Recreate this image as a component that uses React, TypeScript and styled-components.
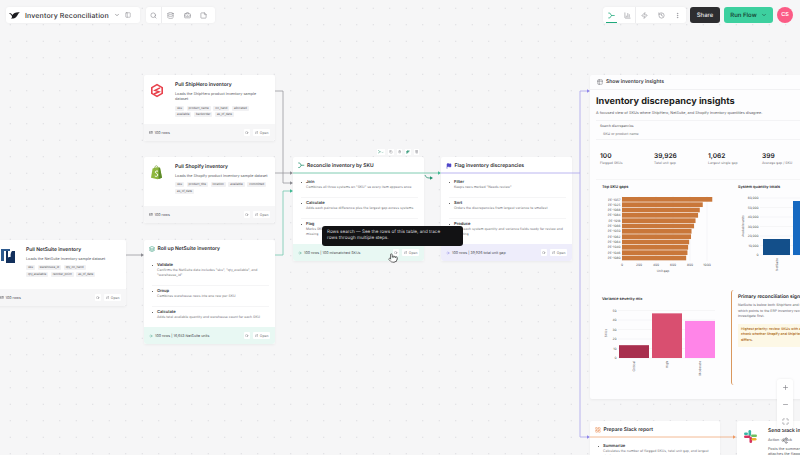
import React from "react";
import styled, { createGlobalStyle } from "styled-components";
import {
  ArrowRight, BarChart3, BriefcaseBusiness, ChevronDown, Database, ExternalLink, Flag, History,
  Layers, LayoutGrid, Maximize, Minus, MoreVertical, PanelLeft, Plus, Pointer, Search, Share2,
  Sparkles, StickyNote, Zap, Table2, Copy, Trash2, Settings,
} from "lucide-react";

const GlobalStyle = createGlobalStyle`
  html, body { margin: 0; padding: 0; height: 100%; }
  body { font-family: Inter, "Liberation Sans", sans-serif; color: #232326; text-rendering: geometricPrecision; }
  * { box-sizing: border-box; }
`;

const Canvas = styled.div`
  position: relative;
  width: 800px;
  height: 455px;
  overflow: hidden;
  background-color: #f6f6f7;
  background-image: radial-gradient(circle, #d4d4d8 0.5px, transparent 0.7px);
  background-size: 16.5px 16.5px;
  background-position: 2px 0;
`;

const Bar = styled.div<{ $left?: number; $right?: number; $gap: number }>`
  position: absolute;
  top: 7px;
  ${(p) => (p.$left !== undefined ? `left: ${p.$left}px;` : "")}
  ${(p) => (p.$right !== undefined ? `right: ${p.$right}px;` : "")}
  display: flex;
  align-items: center;
  gap: ${(p) => p.$gap}px;
  z-index: 5;
`;

const Panel = styled.div<{ $pad?: number }>`
  display: flex;
  align-items: center;
  height: 16px;
  padding-right: ${(p) => p.$pad || 0}px;
  background: #fff;
  border-radius: 3px;
  box-shadow: 0 0 3px rgba(0, 0, 0, 0.05);
`;

const AppTitle = styled.span`
  font-size: 7px;
  font-weight: 500;
  letter-spacing: 0.02em;
  color: #333336;
  margin: 0 5px 0 3px;
  white-space: nowrap;
`;

const ToolButton = styled.div<{ $active?: boolean; $divided?: boolean }>`
  position: relative;
  width: 16.6px;
  height: 16px;
  display: flex;
  align-items: center;
  justify-content: center;
  color: ${(p) => (p.$active ? "#1fa97c" : "#8a8a90")};
  border-right: ${(p) => (p.$divided ? "1px solid #ececee" : "none")};
  ${(p) => (p.$active ? `&::after { content: ""; position: absolute; left: 3px; right: 3px; bottom: 0; height: 1px; background: #1fa97c; }` : "")}
`;

const ShareButton = styled.div`
  height: 16px;
  width: 30px;
  display: flex;
  align-items: center;
  justify-content: center;
  background: #2d2d30;
  color: #e4e4e6;
  border-radius: 3px;
  font-size: 6px;
  font-weight: 500;
`;

const RunButton = styled.div`
  height: 16px;
  width: 49px;
  display: flex;
  align-items: center;
  justify-content: center;
  gap: 4px;
  background: #3dd09f;
  color: #12372b;
  border-radius: 3px;
  font-size: 6px;
  font-weight: 500;
`;

const Avatar = styled.div`
  width: 16px;
  height: 16px;
  border-radius: 50%;
  background: #fb5b85;
  color: #fff;
  font-size: 5.5px;
  font-weight: 600;
  display: flex;
  align-items: center;
  justify-content: center;
`;

const Node = styled.div<{ $x: number; $y: number; $w: number }>`
  position: absolute;
  left: ${(p) => p.$x}px;
  top: ${(p) => p.$y}px;
  width: ${(p) => p.$w}px;
  background: #fff;
  border-radius: 2px;
  box-shadow: 0 1px 3px rgba(0, 0, 0, 0.05);
  z-index: 1;
`;

const SourceBody = styled.div`
  display: flex;
  gap: 10px;
  padding: 6px 6px 0 6px;
  height: 49px;
`;

const LogoBox = styled.div`
  flex: 0 0 15px;
  padding-top: 1px;
`;

const SourceText = styled.div`
  display: flex;
  flex-direction: column;
  min-width: 0;
`;

const NodeTitle = styled.div`
  font-size: 5px;
  font-weight: 600;
  line-height: 8px;
  white-space: nowrap;
  color: #2b2b2f;
`;

const NodeDesc = styled.div<{ $gap?: number }>`
  font-size: 3.75px;
  line-height: 5.4px;
  margin-top: ${(p) => p.$gap ?? 2}px;
  color: #55555b;
`;

const Tags = styled.div<{ $max?: number }>`
  display: flex;
  flex-wrap: wrap;
  gap: 1.7px 2.5px;
  margin-top: 4px;
  ${(p) => (p.$max ? `max-width: ${p.$max}px;` : "")}
`;

const Tag = styled.span`
  font-size: 3px;
  line-height: 4.8px;
  padding: 0 2px;
  background: #f1f1f3;
  border-radius: 1px;
  color: #55555b;
`;

const Footer = styled.div<{ $tone?: string }>`
  display: flex;
  align-items: center;
  gap: 3px;
  height: 17px;
  padding: 0 5px;
  font-size: 3.6px;
  color: #44444a;
  background: ${(p) => p.$tone || "#f6f6f7"};
  border-radius: 0 0 3px 3px;
`;

const FooterText = styled.span`
  flex: 1;
  white-space: nowrap;
  display: flex;
  align-items: center;
  gap: 2px;
`;

const MiniButton = styled.span`
  height: 6.5px;
  display: inline-flex;
  align-items: center;
  gap: 1.5px;
  padding: 0 1.5px;
  background: #fff;
  border-radius: 1px;
  color: #66666c;
  font-size: 3.4px;
`;

const StepHeader = styled.div`
  display: flex;
  align-items: center;
  gap: 2.5px;
  height: 16px;
  padding: 1px 5px 0;
  font-size: 5px;
  font-weight: 600;
  color: #2b2b2f;
  white-space: nowrap;
`;

const StepList = styled.div`
  padding: 4px 6px 0 8px;
`;

const Step = styled.div`
  position: relative;
  padding: 2px 0 7px 5px;
  &:not(:last-child) { border-bottom: 1px solid #f5f5f6; }
  &::before {
    content: "";
    position: absolute;
    left: 0;
    top: 4.5px;
    width: 1.4px;
    height: 1.4px;
    border-radius: 50%;
    background: #333;
  }
`;

const StepName = styled.div`
  font-size: 4.1px;
  font-weight: 600;
  line-height: 6px;
  color: #333336;
`;

const StepDesc = styled.div`
  font-size: 3.4px;
  line-height: 5px;
  color: #77777d;
`;

const EdgeLayer = styled.svg`
  position: absolute;
  inset: 0;
  width: 800px;
  height: 455px;
  z-index: 2;
  pointer-events: none;
`;

const Tooltip = styled.div`
  position: absolute;
  left: 322px;
  top: 226px;
  width: 141px;
  height: 20px;
  padding: 3.5px 5px;
  background: #121214;
  border-radius: 3px;
  color: #d6d6d8;
  font-size: 4.6px;
  line-height: 6.4px;
  white-space: nowrap;
  z-index: 6;
`;

const CursorMark = styled.div`
  position: absolute;
  left: 388px;
  top: 253px;
  color: #222;
  z-index: 7;
  line-height: 0;
`;

const FloatTools = styled.div`
  position: absolute;
  left: 375px;
  top: 149px;
  height: 6px;
  width: 46px;
  display: flex;
  align-items: center;
  justify-content: space-around;
  z-index: 3;
`;

const FloatChip = styled.span<{ $green?: boolean }>`
  display: inline-flex;
  align-items: center;
  height: 6px;
  padding: 0 1px;
  background: #fff;
  color: ${(p) => (p.$green ? "#1f8f6c" : "#77777d")};
`;

const InsightsCard = styled(Node)`
  background: #fdfdfe;
  height: 324px;
`;

const InsightsHeader = styled.div`
  display: flex;
  align-items: center;
  gap: 3px;
  height: 15px;
  padding: 0 7px;
  font-size: 5px;
  font-weight: 600;
  color: #3a3a3e;
  border-bottom: 1px solid #f1f1f3;
`;

const InsightsBody = styled.div`
  padding: 6px 6px 0 6px;
`;

const BigTitle = styled.h1`
  margin: 0;
  font-size: 9.2px;
  line-height: 11px;
  font-weight: 700;
  color: #1e1e21;
  white-space: nowrap;
`;

const Lead = styled.p`
  margin: 3px 0 0;
  font-size: 3.75px;
  line-height: 5px;
  color: #55555b;
  white-space: nowrap;
`;

const SearchBlock = styled.div`
  margin-top: 5px;
  padding: 3px 4px 3px;
  height: 20px;
  border-top: 1px solid #f3f3f5;
  border-bottom: 1px solid #f3f3f5;
`;

const SearchLabel = styled.div`
  font-size: 3.3px;
  line-height: 5px;
  color: #3f3f44;
`;

const SearchInput = styled.div`
  margin: 3px 0 0 3px;
  font-size: 3.5px;
  line-height: 5px;
  color: #77777d;
`;

const Stats = styled.div`
  display: grid;
  grid-template-columns: repeat(4, 54px);
  margin-top: 12px;
  padding-left: 4px;
  height: 28px;
  border-bottom: 1px solid #f5f5f6;
`;

const StatValue = styled.div`
  font-size: 6.6px;
  line-height: 8px;
  font-weight: 600;
  color: #232326;
`;

const StatLabel = styled.div`
  font-size: 3.4px;
  line-height: 5px;
  margin-top: 1px;
  color: #77777d;
  white-space: nowrap;
`;

const ChartRow = styled.div<{ $h: number }>`
  display: grid;
  grid-template-columns: 135px 1fr;
  height: ${(p) => p.$h}px;
  padding-top: 4px;
`;

const ChartCell = styled.div`
  min-width: 0;
`;

const ChartTitle = styled.div<{ $inset: number }>`
  font-size: 3.9px;
  line-height: 6px;
  font-weight: 600;
  margin-left: ${(p) => p.$inset}px;
  color: #232326;
`;

const Signal = styled.div`
  height: 95px;
  margin-top: -6px;
  padding: 4px 0 0 6px;
  border-left: 1px solid #d9985e;
  border-radius: 3px;
`;

const SignalTitle = styled.div`
  font-size: 4.8px;
  line-height: 7px;
  font-weight: 600;
  color: #232326;
  white-space: nowrap;
`;

const SignalText = styled.div`
  margin-top: 2px;
  font-size: 3.5px;
  line-height: 5.6px;
  color: #66666c;
  white-space: nowrap;
`;

const Callout = styled.div`
  margin-top: 4px;
  width: 180px;
  height: 23px;
  padding: 3px;
  background: #fdf8e6;
  color: #a8620f;
  font-size: 3.5px;
  line-height: 5.6px;
  font-weight: 500;
  white-space: nowrap;
`;

const ZoomPanel = styled.div`
  position: absolute;
  left: 777px;
  top: 379px;
  width: 16px;
  height: 50px;
  display: flex;
  flex-direction: column;
  align-items: center;
  gap: 10px;
  padding-top: 4.5px;
  background: #fff;
  border-radius: 3px;
  box-shadow: 0 0 3px rgba(0, 0, 0, 0.08);
  color: #77777d;
  z-index: 5;
`;

const LayoutTool = styled.div`
  position: absolute;
  left: 781px;
  top: 437px;
  line-height: 0;
  color: #77777d;
  z-index: 5;
`;

const sizes = { tool: 7, mini: 3.6 };

const ShipHeroLogo = () => (
  <svg width="14" height="15" viewBox="0 0 14 15">
    <path d="M7 .8 13 4.2v6.6L7 14.2 1 10.8V4.2z" fill="#e8404b" />
    <path d="M7 2.6 11.4 5.1v4.8L7 12.4 2.6 9.9V5.1z" fill="#fff" />
    <path d="M10 4.9 5 7.4l4 1.4-5 2.2" fill="none" stroke="#e8404b" strokeWidth="1.5" />
  </svg>
);

const ShopifyLogo = () => (
  <svg width="13" height="15" viewBox="0 0 13 15">
    <path d="M1 12.8 2.6 3.6 6.6 2.2 10 2.8 12 12.8 7.6 14.2z" fill="#8fb83f" />
    <path d="M8.6 2.6 10 2.8 12 12.8 8.6 14z" fill="#5d8a2c" />
    <path d="M4.6 3.6C4.6 1.2 6 .5 6.8 .8 7.8 1.2 8 2.4 8 3.4" fill="none" stroke="#7ba13a" strokeWidth=".7" />
    <path d="M8 6.2C6.6 5.7 5.2 6.2 5.3 7.2c.1 1.2 2.5 1.2 2.5 2.8 0 1.4-1.9 1.7-3 1" fill="none" stroke="#fff" strokeWidth="1" />
  </svg>
);

const NetSuiteLogo = () => (
  <svg width="15" height="15" viewBox="0 0 15 15">
    <path d="M0 1h9v2H3v10H0z" fill="#2d5a8e" />
    <path d="M5 3h2v7l4-7h3v12H5z" fill="#12305c" />
    <path d="M7 5v4h2.6V5z" fill="#fff" />
  </svg>
);

const SlackLogo = () => (
  <svg width="15" height="15" viewBox="0 0 15 15">
    <rect x="5.5" y="1" width="2.6" height="6" rx="1.3" fill="#38b6a5" />
    <rect x="1" y="6.4" width="6.5" height="2.6" rx="1.3" fill="#d6325f" />
    <rect x="6.5" y="8" width="2.6" height="6" rx="1.3" fill="#d6325f" />
    <rect x="8" y="5.4" width="6" height="2.6" rx="1.3" fill="#6fbf5f" />
    <rect x="8.5" y="9" width="5" height="2.6" rx="1.3" fill="#ecb22e" />
    <rect x="1" y="3.4" width="4" height="2.6" rx="1.3" fill="#38b6a5" />
  </svg>
);

const BrandMark = () => (
  <svg width="11" height="7" viewBox="0 0 11 7" style={{ margin: "0 2px 0 3px" }}>
    <path d="M0 1.2C1.4 .8 2.6 1.8 3.3 3 4.4 1.3 7 0 10.8.4 9 1.2 8.8 3.4 7.2 5 5.6 6.6 3.2 6.8 1.8 6.3 3 5.8 3.2 5 2.9 4.2 2.4 2.8 1.2 1.8 0 1.2z" fill="#1c1c1f" />
  </svg>
);

// branching arrows used for the canvas tab and the join step
const FlowIcon = ({ size, color }: { size: number; color: string }) => (
  <svg width={size} height={size} viewBox="0 0 10 10" fill="none" stroke={color} strokeWidth="1.1" strokeLinecap="round" strokeLinejoin="round">
    <path d="M1 1.5h1.6L5 5 2.6 8.5H1" />
    <path d="M5 5h4" />
  </svg>
);

type SourceProps = {
  x: number; y: number; w: number; title: string; desc: string; tags: string[]; tagsMax?: number; logo: React.ReactNode;
};

const RowButtons = () => (
  <>
    <MiniButton><Search size={sizes.mini} /></MiniButton>
    <MiniButton><ExternalLink size={sizes.mini} /> Open</MiniButton>
  </>
);

const SourceNode = ({ x, y, w, title, desc, tags, tagsMax, logo }: SourceProps) => (
  <Node $x={x} $y={y} $w={w}>
    <SourceBody>
      <LogoBox>{logo}</LogoBox>
      <SourceText>
        <NodeTitle>{title}</NodeTitle>
        <NodeDesc>{desc}</NodeDesc>
        <Tags $max={tagsMax}>{tags.map((t) => <Tag key={t}>{t}</Tag>)}</Tags>
      </SourceText>
    </SourceBody>
    <Footer>
      <FooterText><Database size={sizes.mini} /> 100 rows</FooterText>
      <RowButtons />
    </Footer>
  </Node>
);

type StepNodeProps = {
  x: number; y: number; title: string; icon: React.ReactNode; steps: [string, string][];
  summary: string; tone: string; accent: string;
};

const StepNode = ({ x, y, title, icon, steps, summary, tone, accent }: StepNodeProps) => (
  <Node $x={x} $y={y} $w={131}>
    <StepHeader>{icon}{title}</StepHeader>
    <StepList>
      {steps.map(([name, desc]) => (
        <Step key={name}>
          <StepName>{name}</StepName>
          <StepDesc>{desc}</StepDesc>
        </Step>
      ))}
    </StepList>
    <Footer $tone={tone}>
      <FooterText>
        <ArrowRight size={4} color={accent} /> {summary}
      </FooterText>
      <RowButtons />
    </Footer>
  </Node>
);

const Edges = () => (
  <EdgeLayer viewBox="0 0 800 455">
    <g fill="none" strokeWidth="0.8">
      <path d="M275 91H283V183H290" stroke="#9b9ba0" />
      <path d="M275 173H290" stroke="#9b9ba0" />
      <path d="M126 255H141" stroke="#9b9ba0" />
      <path d="M275 255H283V191H290" stroke="#74c9ae" />
      <path d="M293 173H438" stroke="#5fbfa0" />
      <path d="M425 175C426 178 428 178 431 178" stroke="#1f8f6c" />
      <path d="M441 173H580M587 91H580V437H587" stroke="#a9a3ec" />
      <path d="M590 437H733" stroke="#f0a878" />
    </g>
    <g>
      <path d="M293 173l-3-1.8v3.6z" fill="#8a8a90" />
      <path d="M293 183l-3-1.8v3.6z" fill="#8a8a90" />
      <path d="M293 191l-3-1.8v3.6z" fill="#3fb892" />
      <path d="M144 255l-3-1.8v3.6z" fill="#8a8a90" />
      <path d="M441 173l-3-1.8v3.6z" fill="#3fb892" />
      <path d="M433 178l-3-1.8v3.6z" fill="#1f8f6c" />
      <path d="M590 91l-3-1.8v3.6z" fill="#8f86e8" />
      <path d="M590 437l-3-1.8v3.6z" fill="#8f86e8" />
      <path d="M736 437l-3-1.8v3.6z" fill="#ee9a63" />
    </g>
  </EdgeLayer>
);

const skuBars: [string, number][] = [
  ["PE-1057", 1062], ["PE-1025", 950], ["PE-1068", 915], ["PE-1084", 895],
  ["PE-1018", 865], ["PE-1066", 848], ["PE-1050", 818], ["PE-1062", 812],
  ["PE-1064", 790], ["PE-1040", 778], ["PE-1046", 770], ["PE-1080", 755],
];

const axisText = { fontSize: 3.2, fill: "#55555b", fontFamily: "Inter, sans-serif" };

const TopSkuChart = () => (
  <svg width="135" height="90" viewBox="0 0 135 90">
    {[0, 200, 400, 600, 800, 1000].map((v) => {
      const x = 26 + v * 0.085;
      return (
        <g key={v}>
          <line x1={x} x2={x} y1="6" y2="71" stroke="#ececee" strokeWidth="0.4" />
          <text x={x} y="75.5" textAnchor="middle" {...axisText}>{v}</text>
        </g>
      );
    })}
    {skuBars.map(([sku, value], i) => (
      <g key={sku}>
        <rect x="26" y={7 + i * 5.33} width={value * 0.085} height="4.7" fill="#c9773a" />
        <text x="24.5" y={10.5 + i * 5.33} textAnchor="end" {...axisText}>{sku}</text>
      </g>
    ))}
    <text x="67" y="82" textAnchor="middle" {...axisText}>Unit gap</text>
  </svg>
);

const TotalsChart = () => (
  <svg width="100" height="90" viewBox="0 0 100 90">
    {[0, 10000, 20000, 30000, 40000, 50000, 60000].map((v, i) => (
      <g key={v}>
        <line x1="29" x2="100" y1={65 - i * 9.5} y2={65 - i * 9.5} stroke="#ececee" strokeWidth="0.4" />
        <text x="27.5" y={66.2 - i * 9.5} textAnchor="end" {...axisText}>{v === 0 ? "0" : v.toLocaleString("en-US")}</text>
      </g>
    ))}
    <rect x="32" y="49" width="27" height="16" fill="#134f8a" />
    <rect x="62" y="11" width="30" height="54" fill="#1669c1" />
    <text transform="translate(13 36) rotate(-90)" textAnchor="middle" {...axisText}>Available units</text>
    <text transform="translate(47 81) rotate(-90)" {...axisText}>NetSuite</text>
  </svg>
);

const severity: [string, number, string][] = [
  ["Critical", 13.5, "#a82f4e"], ["High", 47, "#d94f70"], ["Moderate", 39, "#ff85e8"],
];

const SeverityChart = () => (
  <svg width="135" height="80" viewBox="0 0 135 80">
    {[0, 10, 20, 30, 40, 50].map((v, i) => (
      <g key={v}>
        <line x1="22" x2="119" y1={56 - i * 9.5} y2={56 - i * 9.5} stroke="#ececee" strokeWidth="0.4" />
        <text x="20.5" y={57.2 - i * 9.5} textAnchor="end" {...axisText}>{v}</text>
      </g>
    ))}
    {severity.map(([label, value, color], i) => (
      <g key={label}>
        <rect x={23 + i * 33} y={56 - value * 0.95} width="30" height={value * 0.95} fill={color} />
        <text transform={`translate(${39 + i * 33} 59) rotate(-90)`} textAnchor="end" {...axisText}>{label}</text>
      </g>
    ))}
    <text transform="translate(11 31) rotate(-90)" textAnchor="middle" {...axisText}>SKUs</text>
  </svg>
);

const App: React.FC = () => (
  <Canvas>
    <GlobalStyle />

    <Bar $left={6} $gap={6}>
      <Panel $pad={3.4}>
        <BrandMark />
        <AppTitle>Inventory Reconciliation</AppTitle>
        <ChevronDown size={6} color="#55555b" />
        <ToolButton><PanelLeft size={6} /></ToolButton>
      </Panel>
      <Panel $pad={2.6}>
        <ToolButton $divided><Search size={sizes.tool} /></ToolButton>
        <ToolButton><Database size={sizes.tool} /></ToolButton>
        <ToolButton><BriefcaseBusiness size={sizes.tool} /></ToolButton>
        <ToolButton><StickyNote size={sizes.tool} /></ToolButton>
      </Panel>
    </Bar>

    <Bar $right={7} $gap={4}>
      <Panel>
        <ToolButton $active><FlowIcon size={7} color="#1fa97c" /></ToolButton>
        <ToolButton $divided><BarChart3 size={sizes.tool} /></ToolButton>
        <ToolButton><Zap size={sizes.tool} /></ToolButton>
        <ToolButton><History size={sizes.tool} /></ToolButton>
        <ToolButton><MoreVertical size={sizes.tool} /></ToolButton>
      </Panel>
      <ShareButton>Share</ShareButton>
      <RunButton>Run Flow <ChevronDown size={6} /></RunButton>
      <Avatar>CS</Avatar>
    </Bar>

    <SourceNode
      x={144} y={75} w={131} logo={<ShipHeroLogo />} tagsMax={80}
      title="Pull ShipHero inventory"
      desc="Loads the ShipHero product inventory sample dataset"
      tags={["sku", "product_name", "on_hand", "allocated", "available", "backorder", "as_of_date"]}
    />
    <SourceNode
      x={144} y={157} w={131} logo={<ShopifyLogo />}
      title="Pull Shopify inventory"
      desc="Loads the Shopify product inventory sample dataset"
      tags={["sku", "product_title", "location", "available", "committed", "as_of_date"]}
    />
    <SourceNode
      x={-5} y={240} w={131} logo={<NetSuiteLogo />} tagsMax={84}
      title="Pull NetSuite inventory"
      desc="Loads the NetSuite inventory sample dataset"
      tags={["sku", "warehouse_id", "qty_on_hand", "qty_available", "reorder_point", "as_of_date"]}
    />

    <StepNode
      x={144} y={240} title="Roll up NetSuite inventory" icon={<Layers size={6} color="#1f8f6c" />}
      tone="#e8f8f3" accent="#1f8f6c" summary="100 rows  |  16,653 NetSuite units"
      steps={[
        ["Validate", 'Confirms the NetSuite data includes "sku", "qty_available", and "warehouse_id"'],
        ["Group", "Combines warehouse rows into one row per SKU"],
        ["Calculate", "Adds total available quantity and warehouse count for each SKU"],
      ]}
    />
    <StepNode
      x={293} y={157} title="Reconcile inventory by SKU" icon={<FlowIcon size={6.5} color="#1f8f6c" />}
      tone="#e8f8f3" accent="#1f8f6c" summary="100 rows  |  100 mismatched SKUs"
      steps={[
        ["Join", 'Combines all three systems on "SKU" so every item appears once'],
        ["Calculate", "Adds each pairwise difference plus the largest gap across systems"],
        ["Flag", "Marks SKUs with a variance above the threshold and any that are missing"],
      ]}
    />
    <StepNode
      x={441} y={157} title="Flag inventory discrepancies" icon={<Flag size={6} color="#4f46c8" fill="#4f46c8" />}
      tone="#eeedfb" accent="#6f66e0" summary="100 rows  |  39,926 total unit gap"
      steps={[
        ["Filter", 'Keeps rows marked "Needs review"'],
        ["Sort", "Orders the discrepancies from largest variance to smallest"],
        ["Produce", "Adds each system quantity and variance fields ready for review and reporting"],
      ]}
    />

    <FloatTools>
      <FloatChip $green><FlowIcon size={3.5} color="#1f8f6c" /><ChevronDown size={3} /></FloatChip>
      <FloatChip><Copy size={3.5} /></FloatChip>
      <FloatChip><Settings size={3.5} /></FloatChip>
      <FloatChip $green><Sparkles size={3.5} fill="#1f8f6c" /></FloatChip>
      <FloatChip><Trash2 size={3.5} /></FloatChip>
    </FloatTools>

    <InsightsCard $x={590} $y={75} $w={400}>
      <InsightsHeader><Table2 size={6} color="#77777d" /> Show inventory insights</InsightsHeader>
      <InsightsBody>
        <BigTitle>Inventory discrepancy insights</BigTitle>
        <Lead>A focused view of SKUs where ShipHero, NetSuite, and Shopify inventory quantities disagree.</Lead>
        <SearchBlock>
          <SearchLabel>Search discrepancies</SearchLabel>
          <SearchInput>SKU or product name</SearchInput>
        </SearchBlock>
        <Stats>
          <div><StatValue>100</StatValue><StatLabel>Flagged SKUs</StatLabel></div>
          <div><StatValue>39,926</StatValue><StatLabel>Total unit gap</StatLabel></div>
          <div><StatValue>1,062</StatValue><StatLabel>Largest single gap</StatLabel></div>
          <div><StatValue>399</StatValue><StatLabel>Average gap / SKU</StatLabel></div>
        </Stats>
        <ChartRow $h={112}>
          <ChartCell>
            <ChartTitle $inset={6}>Top SKU gaps</ChartTitle>
            <TopSkuChart />
          </ChartCell>
          <ChartCell>
            <ChartTitle $inset={7}>System quantity totals</ChartTitle>
            <TotalsChart />
          </ChartCell>
        </ChartRow>
        <ChartRow $h={95}>
          <ChartCell>
            <ChartTitle $inset={6}>Variance severity mix</ChartTitle>
            <SeverityChart />
          </ChartCell>
          <Signal>
            <SignalTitle>Primary reconciliation signal</SignalTitle>
            <SignalText>
              NetSuite is below both ShipHero and Shopify on most flagged SKUs,<br />
              which points to the ERP inventory record as the first place to<br />
              investigate first.
            </SignalText>
            <Callout>
              Highest priority: review SKUs with a critical variance, then<br />
              check whether Shopify and ShipHero agree where NetSuite<br />
              differs.
            </Callout>
          </Signal>
        </ChartRow>
      </InsightsBody>
    </InsightsCard>

    <Node $x={590} $y={421} $w={130}>
      <StepHeader><LayoutGrid size={6} color="#e8915a" /> Prepare Slack report</StepHeader>
      <StepList>
        <Step>
          <StepName>Summarize</StepName>
          <StepDesc>Calculates the number of flagged SKUs, total unit gap, and largest single gap</StepDesc>
        </Step>
      </StepList>
    </Node>

    <Node $x={737} $y={421} $w={130}>
      <SourceBody>
        <LogoBox><SlackLogo /></LogoBox>
        <SourceText>
          <NodeTitle>Send Slack inventory alert</NodeTitle>
          <NodeDesc>Action · Slack</NodeDesc>
          <NodeDesc $gap={3.5}>Posts the summary and<br />attaches the flagged rows</NodeDesc>
        </SourceText>
      </SourceBody>
    </Node>

    <Edges />

    <Tooltip>Rows search — See the rows of this table, and trace<br />rows through multiple steps.</Tooltip>
    <CursorMark><Pointer size={10} fill="#fff" strokeWidth={1.5} /></CursorMark>

    <ZoomPanel>
      <Plus size={7} />
      <Minus size={7} />
      <Maximize size={7} />
    </ZoomPanel>
    <LayoutTool><Share2 size={7} /></LayoutTool>
  </Canvas>
);

export default App;
